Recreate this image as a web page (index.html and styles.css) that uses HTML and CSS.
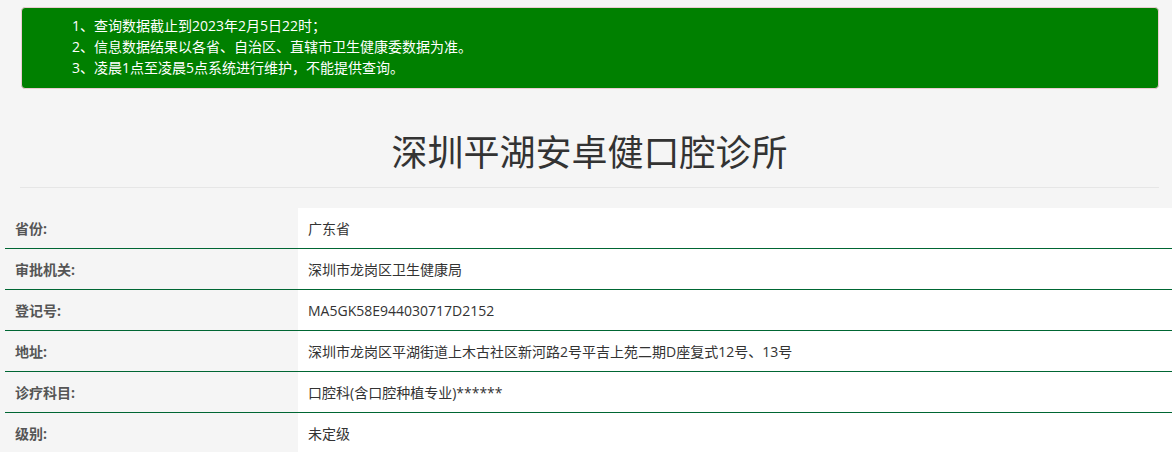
FILE: index.html
```html
<!DOCTYPE html>
<html lang="zh-CN">
<head>
<meta charset="utf-8">
<title>深圳平湖安卓健口腔诊所</title>
<link rel="stylesheet" href="styles.css">
</head>
<body>
<div class="notice">
  <ul class="notice-list">
    <li>1、查询数据截止到2023年2月5日22时；</li>
    <li>2、信息数据结果以各省、自治区、直辖市卫生健康委数据为准。</li>
    <li>3、凌晨1点至凌晨5点系统进行维护，不能提供查询。</li>
  </ul>
</div>
<div class="header">
  <h1 class="title">深圳平湖安卓健口腔诊所</h1>
</div>
<div class="info">
  <div class="row"><div class="label">省份:</div><div class="value">广东省</div></div>
  <div class="row"><div class="label">审批机关:</div><div class="value">深圳市龙岗区卫生健康局</div></div>
  <div class="row"><div class="label">登记号:</div><div class="value">MA5GK58E944030717D2152</div></div>
  <div class="row"><div class="label">地址:</div><div class="value">深圳市龙岗区平湖街道上木古社区新河路2号平吉上苑二期D座复式12号、13号</div></div>
  <div class="row"><div class="label">诊疗科目:</div><div class="value">口腔科(含口腔种植专业)******</div></div>
  <div class="row"><div class="label">级别:</div><div class="value">未定级</div></div>
</div>
</body>
</html>
```
FILE: styles.css
```css
html, body {
  margin: 0;
  padding: 0;
}
body {
  background: #f5f5f5;
  font-family: "Open Sans", "Noto Sans CJK SC", sans-serif;
  font-size: 14px;
  color: #333;
  overflow: hidden;
}
.notice {
  margin: 7px 0 0 21px;
  width: 1136px;
  background: #008000;
  border: 1px solid #ebccd1;
  border-radius: 4px;
  color: #fff;
  padding: 7px 0 10px;
}
.notice-list {
  list-style: none;
  margin: 0;
  padding: 0 0 0 50px;
}
.notice-list li {
  line-height: 21px;
  font-size: 14px;
}
.header {
  margin: 0 13px 0 20px;
  border-bottom: 1px solid #e6e6e6;
  padding: 44px 0 14px;
}
.title {
  margin: 0;
  font-size: 36px;
  font-weight: normal;
  line-height: 40px;
  text-align: center;
  color: #333;
}
.info {
  margin: 20px 0 0 5px;
  display: flex;
  flex-direction: column;
}
.row {
  display: grid;
  grid-template-columns: 293px 1fr;
  height: 40px;
  border-bottom: 1px solid #006633;
}
.row:last-child {
  border-bottom: none;
}
.label {
  display: flex;
  align-items: center;
  padding-left: 10px;
  font-weight: bold;
  font-size: 14px;
  color: #555;
}
.value {
  display: flex;
  align-items: center;
  padding-left: 10px;
  background: #fff;
  font-size: 14px;
  color: #333;
}
```
